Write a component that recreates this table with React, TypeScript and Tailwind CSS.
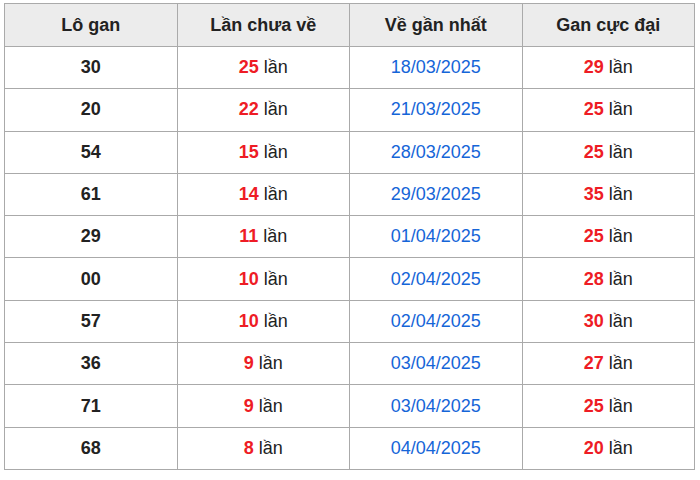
const rows = [
  { lo: "30", chua: 25, ve: "18/03/2025", gan: 29 },
  { lo: "20", chua: 22, ve: "21/03/2025", gan: 25 },
  { lo: "54", chua: 15, ve: "28/03/2025", gan: 25 },
  { lo: "61", chua: 14, ve: "29/03/2025", gan: 35 },
  { lo: "29", chua: 11, ve: "01/04/2025", gan: 25 },
  { lo: "00", chua: 10, ve: "02/04/2025", gan: 28 },
  { lo: "57", chua: 10, ve: "02/04/2025", gan: 30 },
  { lo: "36", chua: 9, ve: "03/04/2025", gan: 27 },
  { lo: "71", chua: 9, ve: "03/04/2025", gan: 25 },
  { lo: "68", chua: 8, ve: "04/04/2025", gan: 20 },
];

// bảng lô gan
export default function App() {
  return (
    <div className="w-[700px] h-[480px] bg-white pt-[3px] pl-[4px] font-['Liberation_Sans',Arial,sans-serif] text-[18px] text-[#222]">
      <table className="w-[691px] border-collapse table-fixed text-center">
        <thead>
          <tr className="h-[43px] bg-[#ececec]">
            <th className="border border-[#aaa] font-bold">Lô gan</th>
            <th className="border border-[#aaa] font-bold">Lần chưa về</th>
            <th className="border border-[#aaa] font-bold">Về gần nhất</th>
            <th className="border border-[#aaa] font-bold">Gan cực đại</th>
          </tr>
        </thead>
        <tbody>
          {rows.map((r, i) => (
            <tr key={i} className="h-[42.3px]">
              <td className="border border-[#aaa] font-bold">{r.lo}</td>
              <td className="border border-[#aaa]">
                <span className="font-bold text-[#ee1c25]">{r.chua}</span> lần
              </td>
              <td className="border border-[#aaa] text-[#1565d8]">{r.ve}</td>
              <td className="border border-[#aaa]">
                <span className="font-bold text-[#ee1c25]">{r.gan}</span> lần
              </td>
            </tr>
          ))}
        </tbody>
      </table>
    </div>
  );
}
